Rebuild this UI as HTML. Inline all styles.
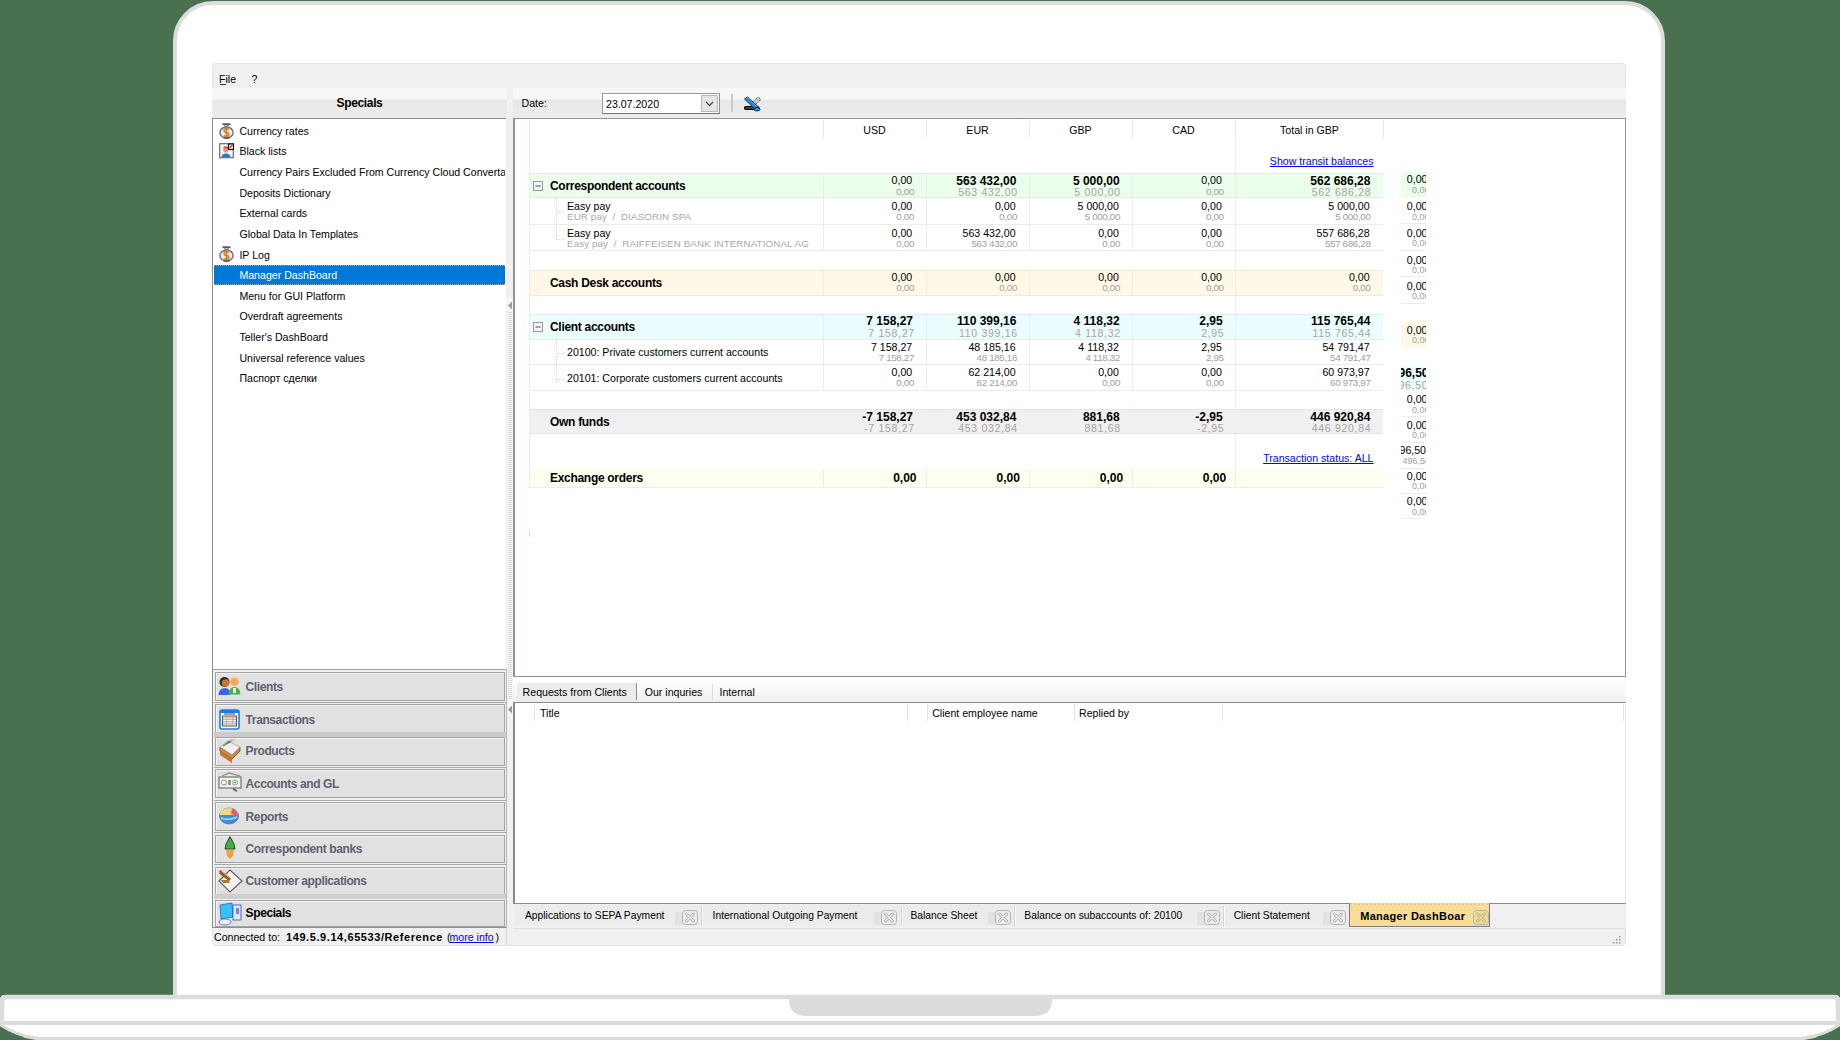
<!DOCTYPE html><html><head><meta charset="utf-8"><style>
html,body{margin:0;padding:0;}
body{width:1840px;height:1040px;position:relative;overflow:hidden;background:#49714f;font-family:"Liberation Sans", sans-serif;}
.t{position:absolute;white-space:pre;line-height:1;font-family:"Liberation Sans", sans-serif;}
.r{position:absolute;box-sizing:border-box;}
</style></head><body>
<div class="r" style="left:173px;top:1px;width:1492px;height:1040px;background:#fff;border:4.5px solid #dcdcdc;border-radius:40px;"></div>
<svg class="r" style="left:0px;top:990px" width="1840" height="50" viewBox="0 0 1840 50">
<path d="M5 5 H1835 Q1840 5 1840 10 V35 Q1820 50 1790 50 H50 Q20 50 0 35 V10 Q0 5 5 5 Z" fill="#fff"/>
<path d="M6 7 H1834 Q1838 7 1838 11 V33" fill="none" stroke="#dcdcdc" stroke-width="4.5"/>
<path d="M6 7 Q2 7 2 11 V33" fill="none" stroke="#dcdcdc" stroke-width="4.5"/>
<rect x="0" y="31" width="1840" height="4" fill="#dcdcdc"/>
<rect x="0" y="47" width="1840" height="3" fill="#dcdcdc"/>
<path d="M0 35 Q14 47 36 50 L0 50 Z" fill="#49714f"/>
<path d="M1840 35 Q1826 47 1804 50 L1840 50 Z" fill="#49714f"/>
<path d="M0 34.5 Q16 46 40 48.5" fill="none" stroke="#dcdcdc" stroke-width="3"/>
<path d="M1840 34.5 Q1824 46 1800 48.5" fill="none" stroke="#dcdcdc" stroke-width="3"/>
<path d="M789 6 H1052 V10 Q1052 26 1034 26 H807 Q789 26 789 10 Z" fill="#dcdcdc"/>
</svg>
<div class="r" style="left:212px;top:63px;width:1414px;height:883px;background:#f0f0f0;border:1px solid #e2e2e2;border-radius:4px;"></div>
<div class="t" style="left:219.00px;top:73.83px;font-size:10.6px;font-weight:400;color:#000;">File</div>
<div class="r" style="left:220px;top:84px;width:6px;height:1px;background:#333;"></div>
<div class="t" style="left:251.50px;top:73.83px;font-size:10.6px;font-weight:400;color:#000;">?</div>
<div class="r" style="left:212px;top:88px;width:295px;height:30px;background:linear-gradient(#f7f7f7 0px,#f7f7f7 11px,#e8e8e8 12px,#ececec 30px);"></div>
<div class="t" style="left:59.50px;width:600px;text-align:center;top:96.84px;font-size:12px;font-weight:700;color:#000;letter-spacing:-0.35px;">Specials</div>
<div class="r" style="left:212px;top:118px;width:294px;height:551px;background:#fff;border-left:1px solid #8c8c8c;border-top:1px solid #8c8c8c;"></div>
<div class="r" style="left:214px;top:264.5px;width:291px;height:20.5px;background:#0078d7;border-top:1px dotted #e8a040;border-bottom:1px dotted #e8a040;"></div>
<div class="r" style="left:213px;top:119px;width:292px;height:300px;overflow:hidden">
<div class="t" style="left:26.40px;top:7.03px;font-size:10.6px;font-weight:400;color:#000;">Currency rates</div>
<div class="t" style="left:26.40px;top:27.03px;font-size:10.6px;font-weight:400;color:#000;">Black lists</div>
<div class="t" style="left:26.40px;top:48.03px;font-size:10.6px;font-weight:400;color:#000;">Currency Pairs Excluded From Currency Cloud Convertation</div>
<div class="t" style="left:26.40px;top:69.03px;font-size:10.6px;font-weight:400;color:#000;">Deposits Dictionary</div>
<div class="t" style="left:26.40px;top:89.03px;font-size:10.6px;font-weight:400;color:#000;">External cards</div>
<div class="t" style="left:26.40px;top:110.03px;font-size:10.6px;font-weight:400;color:#000;">Global Data In Templates</div>
<div class="t" style="left:26.40px;top:131.03px;font-size:10.6px;font-weight:400;color:#000;">IP Log</div>
<div class="t" style="left:26.40px;top:151.03px;font-size:10.6px;font-weight:400;color:#fff;">Manager DashBoard</div>
<div class="t" style="left:26.40px;top:172.03px;font-size:10.6px;font-weight:400;color:#000;">Menu for GUI Platform</div>
<div class="t" style="left:26.40px;top:192.03px;font-size:10.6px;font-weight:400;color:#000;">Overdraft agreements</div>
<div class="t" style="left:26.40px;top:213.03px;font-size:10.6px;font-weight:400;color:#000;">Teller&#x27;s DashBoard</div>
<div class="t" style="left:26.40px;top:234.03px;font-size:10.6px;font-weight:400;color:#000;">Universal reference values</div>
<div class="t" style="left:26.40px;top:254.03px;font-size:10.6px;font-weight:400;color:#000;">Паспорт сделки</div>
</div>
<div class="r" style="left:506px;top:118px;width:7px;height:810px;background:#f0f0f0;"></div>
<div class="r" style="left:507px;top:298px;width:6px;height:418px;background:#f6f6f6;"></div>
<div class="r" style="left:508px;top:312px;width:4px;height:388px;background:repeating-linear-gradient(#d8d8d8 0 1px,#f6f6f6 1px 2px);"></div>
<svg class="r" style="left:507px;top:300px" width="6" height="11" viewBox="0 0 6 11"><path d="M5 1.5 L1 5.5 L5 9.5 Z" fill="#9a9a9a"/></svg>
<svg class="r" style="left:507px;top:704px" width="6" height="11" viewBox="0 0 6 11"><path d="M5 1.5 L1 5.5 L5 9.5 Z" fill="#9a9a9a"/></svg>
<div class="r" style="left:513px;top:88px;width:1113px;height:30px;background:linear-gradient(#f7f7f7 0px,#f7f7f7 11px,#e8e8e8 12px,#ececec 30px);"></div>
<div class="t" style="left:521.50px;top:98.03px;font-size:10.6px;font-weight:400;color:#000;">Date:</div>
<div class="r" style="left:602px;top:93px;width:118px;height:21px;background:#fff;border:1px solid #9c9c9c;border-bottom-color:#767676;border-right-color:#8890a0;"></div>
<div class="r" style="left:701px;top:95px;width:17px;height:17px;background:#e6e6e6;border:1px solid #b9b9b9;"></div>
<svg class="r" style="left:704px;top:99px" width="11" height="9" viewBox="0 0 11 9"><path d="M2 3 L5.5 6.5 L9 3" fill="none" stroke="#444" stroke-width="1.2"/></svg>
<div class="t" style="left:606.00px;top:99.03px;font-size:10.6px;font-weight:400;color:#000;">23.07.2020</div>
<div class="r" style="left:731px;top:94px;width:2px;height:18px;background:#cacaca;"></div>
<div class="r" style="left:513px;top:118px;width:1113px;height:559px;background:#fff;border:1px solid #8f939a;border-width:1px 1px 1px 2px;"></div>
<div class="r" style="left:513px;top:677px;width:1113px;height:26px;background:linear-gradient(#ffffff,#f0f0f0);"></div>
<div class="r" style="left:517px;top:683px;width:119px;height:19px;background:#ececec;"></div>
<div class="r" style="left:636px;top:683px;width:1px;height:17px;background:#8c8c8c;"></div>
<div class="r" style="left:712px;top:684px;width:1px;height:16px;background:#dedede;"></div>
<div class="t" style="left:522.60px;top:687.23px;font-size:10.6px;font-weight:400;color:#000;">Requests from Clients</div>
<div class="t" style="left:644.70px;top:687.23px;font-size:10.6px;font-weight:400;color:#000;">Our inquries</div>
<div class="t" style="left:719.50px;top:687.23px;font-size:10.6px;font-weight:400;color:#000;">Internal</div>
<div class="r" style="left:513px;top:702px;width:1113px;height:202px;background:#fff;border-top:1px solid #8a8a8a;border-left:2px solid #8a8a8a;border-right:1px solid #e6e6e6;border-bottom:1px solid #8a8a8a;"></div>
<div class="r" style="left:1623px;top:704px;width:1px;height:17px;background:#e2e2e2;"></div>
<div class="r" style="left:534px;top:704px;width:1px;height:17px;background:#e2e2e2;"></div>
<div class="r" style="left:907px;top:704px;width:1px;height:17px;background:#e2e2e2;"></div>
<div class="r" style="left:927px;top:704px;width:1px;height:17px;background:#e2e2e2;"></div>
<div class="r" style="left:1074px;top:704px;width:1px;height:17px;background:#e2e2e2;"></div>
<div class="r" style="left:1222px;top:704px;width:1px;height:17px;background:#e2e2e2;"></div>
<div class="t" style="left:540.00px;top:707.53px;font-size:10.6px;font-weight:400;color:#000;">Title</div>
<div class="t" style="left:932.20px;top:707.53px;font-size:10.6px;font-weight:400;color:#000;">Client employee name</div>
<div class="t" style="left:1079.00px;top:707.53px;font-size:10.6px;font-weight:400;color:#000;">Replied by</div>
<div class="r" style="left:513px;top:904px;width:1113px;height:25px;background:#f0f0f0;border-bottom:1px solid #dedede;"></div>
<div class="r" style="left:515px;top:905px;width:186px;height:21px;background:#ececec;"></div>
<div class="r" style="left:675px;top:912px;width:22px;height:13px;background:#e2e2e2;"></div>
<div class="t" style="left:525.00px;top:911.48px;font-size:10.3px;font-weight:400;color:#000;">Applications to SEPA Payment</div>
<svg class="r" style="left:682px;top:910px" width="16" height="15" viewBox="0 0 16 15"><rect x="0.5" y="0.5" width="15" height="14" rx="3" fill="#ececec" stroke="#b4b4b4"/><path d="M4.5 4 L11.5 11 M11.5 4 L4.5 11" stroke="#b0b0b0" stroke-width="3" stroke-linecap="round"/><path d="M4.5 4 L11.5 11 M11.5 4 L4.5 11" stroke="#ececec" stroke-width="1.2" stroke-linecap="round"/></svg>
<div class="r" style="left:702px;top:905px;width:199px;height:21px;background:#ececec;"></div>
<div class="r" style="left:874px;top:912px;width:22px;height:13px;background:#e2e2e2;"></div>
<div class="t" style="left:712.60px;top:911.48px;font-size:10.3px;font-weight:400;color:#000;">International Outgoing Payment</div>
<svg class="r" style="left:881px;top:910px" width="16" height="15" viewBox="0 0 16 15"><rect x="0.5" y="0.5" width="15" height="14" rx="3" fill="#ececec" stroke="#b4b4b4"/><path d="M4.5 4 L11.5 11 M11.5 4 L4.5 11" stroke="#b0b0b0" stroke-width="3" stroke-linecap="round"/><path d="M4.5 4 L11.5 11 M11.5 4 L4.5 11" stroke="#ececec" stroke-width="1.2" stroke-linecap="round"/></svg>
<div class="r" style="left:901px;top:905px;width:113px;height:21px;background:#ececec;"></div>
<div class="r" style="left:987.6px;top:912px;width:22px;height:13px;background:#e2e2e2;"></div>
<div class="t" style="left:910.40px;top:911.48px;font-size:10.3px;font-weight:400;color:#000;">Balance Sheet</div>
<svg class="r" style="left:994.6px;top:910px" width="16" height="15" viewBox="0 0 16 15"><rect x="0.5" y="0.5" width="15" height="14" rx="3" fill="#ececec" stroke="#b4b4b4"/><path d="M4.5 4 L11.5 11 M11.5 4 L4.5 11" stroke="#b0b0b0" stroke-width="3" stroke-linecap="round"/><path d="M4.5 4 L11.5 11 M11.5 4 L4.5 11" stroke="#ececec" stroke-width="1.2" stroke-linecap="round"/></svg>
<div class="r" style="left:1014px;top:905px;width:209px;height:21px;background:#ececec;"></div>
<div class="r" style="left:1197px;top:912px;width:22px;height:13px;background:#e2e2e2;"></div>
<div class="t" style="left:1024.30px;top:911.48px;font-size:10.3px;font-weight:400;color:#000;">Balance on subaccounts of: 20100</div>
<svg class="r" style="left:1204px;top:910px" width="16" height="15" viewBox="0 0 16 15"><rect x="0.5" y="0.5" width="15" height="14" rx="3" fill="#ececec" stroke="#b4b4b4"/><path d="M4.5 4 L11.5 11 M11.5 4 L4.5 11" stroke="#b0b0b0" stroke-width="3" stroke-linecap="round"/><path d="M4.5 4 L11.5 11 M11.5 4 L4.5 11" stroke="#ececec" stroke-width="1.2" stroke-linecap="round"/></svg>
<div class="r" style="left:1223px;top:905px;width:126px;height:21px;background:#ececec;"></div>
<div class="r" style="left:1323px;top:912px;width:22px;height:13px;background:#e2e2e2;"></div>
<div class="t" style="left:1233.70px;top:911.48px;font-size:10.3px;font-weight:400;color:#000;">Client Statement</div>
<svg class="r" style="left:1330px;top:910px" width="16" height="15" viewBox="0 0 16 15"><rect x="0.5" y="0.5" width="15" height="14" rx="3" fill="#ececec" stroke="#b4b4b4"/><path d="M4.5 4 L11.5 11 M11.5 4 L4.5 11" stroke="#b0b0b0" stroke-width="3" stroke-linecap="round"/><path d="M4.5 4 L11.5 11 M11.5 4 L4.5 11" stroke="#ececec" stroke-width="1.2" stroke-linecap="round"/></svg>
<div class="r" style="left:701px;top:906px;width:1px;height:20px;background:#d6d6d6;"></div>
<div class="r" style="left:702px;top:906px;width:1px;height:20px;background:#fafafa;"></div>
<div class="r" style="left:901px;top:906px;width:1px;height:20px;background:#d6d6d6;"></div>
<div class="r" style="left:902px;top:906px;width:1px;height:20px;background:#fafafa;"></div>
<div class="r" style="left:1014px;top:906px;width:1px;height:20px;background:#d6d6d6;"></div>
<div class="r" style="left:1015px;top:906px;width:1px;height:20px;background:#fafafa;"></div>
<div class="r" style="left:1223px;top:906px;width:1px;height:20px;background:#d6d6d6;"></div>
<div class="r" style="left:1224px;top:906px;width:1px;height:20px;background:#fafafa;"></div>
<div class="r" style="left:1349px;top:903px;width:141px;height:24px;background:#f8dc9a;border:1px solid #7c7c7c;border-top:none;"></div>
<div class="r" style="left:1350px;top:903px;width:139px;height:2px;background:repeating-linear-gradient(90deg,#f0c870 0 2px,#f8dc9a 2px 4px);"></div>
<div class="t" style="left:1360.20px;top:910.79px;font-size:11px;font-weight:700;color:#000;letter-spacing:0.3px;">Manager DashBoar</div>
<svg class="r" style="left:1472.5px;top:910px" width="16" height="15" viewBox="0 0 16 15"><rect x="0.5" y="0.5" width="15" height="14" rx="3" fill="#f6d88a" stroke="#b4b4b4"/><path d="M4.5 4 L11.5 11 M11.5 4 L4.5 11" stroke="#b0b0b0" stroke-width="3" stroke-linecap="round"/><path d="M4.5 4 L11.5 11 M11.5 4 L4.5 11" stroke="#f6d88a" stroke-width="1.2" stroke-linecap="round"/></svg>
<div class="t" style="left:214.00px;top:932.03px;font-size:10.6px;font-weight:400;color:#000;">Connected to:</div>
<div class="t" style="left:286.00px;top:931.69px;font-size:11px;font-weight:700;color:#000;letter-spacing:0.58px;">149.5.9.14,65533/Reference</div>
<div class="t" style="left:447.00px;top:932.03px;font-size:10.6px;font-weight:400;color:#000;">(</div>
<div class="t" style="left:449.50px;top:932.03px;font-size:10.6px;font-weight:400;color:#0000ee;text-decoration:underline;">more info</div>
<div class="t" style="left:495.50px;top:932.03px;font-size:10.6px;font-weight:400;color:#000;">)</div>
<div class="r" style="left:506px;top:928px;width:1px;height:17px;background:#d6d6d6;"></div>
<svg class="r" style="left:1612px;top:935px" width="10" height="10" viewBox="0 0 10 10"><rect x="7" y="1" width="1.5" height="1.5" fill="#9a9a9a"/><rect x="7" y="4" width="1.5" height="1.5" fill="#9a9a9a"/><rect x="4" y="4" width="1.5" height="1.5" fill="#9a9a9a"/><rect x="7" y="7" width="1.5" height="1.5" fill="#9a9a9a"/><rect x="4" y="7" width="1.5" height="1.5" fill="#9a9a9a"/><rect x="1" y="7" width="1.5" height="1.5" fill="#9a9a9a"/></svg>
<div class="r" style="left:212px;top:669px;width:295px;height:259px;background:#f0f0f0;border-top:1px solid #a0a0a0;border-left:1px solid #8c8c8c;border-right:1px solid #b4b4b4;border-bottom:1px solid #909090;"></div>
<div class="r" style="left:215px;top:672px;width:289.5px;height:29px;background:#e1e1e1;border:1px solid #a4a4a4;box-shadow:inset 1px 1px 0 #f2f2f2;"></div>
<div class="t" style="left:245.60px;top:680.84px;font-size:12px;font-weight:700;color:#5d6271;letter-spacing:-0.4px;">Clients</div>
<div class="r" style="left:215px;top:704px;width:289.5px;height:29px;background:#e1e1e1;border:1px solid #a4a4a4;box-shadow:inset 1px 1px 0 #f2f2f2;"></div>
<div class="t" style="left:245.60px;top:713.54px;font-size:12px;font-weight:700;color:#5d6271;letter-spacing:-0.4px;">Transactions</div>
<div class="r" style="left:215px;top:737px;width:289.5px;height:29px;background:#e1e1e1;border:1px solid #a4a4a4;box-shadow:inset 1px 1px 0 #f2f2f2;"></div>
<div class="t" style="left:245.60px;top:745.44px;font-size:12px;font-weight:700;color:#5d6271;letter-spacing:-0.4px;">Products</div>
<div class="r" style="left:215px;top:769px;width:289.5px;height:29px;background:#e1e1e1;border:1px solid #a4a4a4;box-shadow:inset 1px 1px 0 #f2f2f2;"></div>
<div class="t" style="left:245.60px;top:777.94px;font-size:12px;font-weight:700;color:#5d6271;letter-spacing:-0.4px;">Accounts and GL</div>
<div class="r" style="left:215px;top:802px;width:289.5px;height:29px;background:#e1e1e1;border:1px solid #a4a4a4;box-shadow:inset 1px 1px 0 #f2f2f2;"></div>
<div class="t" style="left:245.60px;top:810.84px;font-size:12px;font-weight:700;color:#5d6271;letter-spacing:-0.4px;">Reports</div>
<div class="r" style="left:215px;top:834.5px;width:289.5px;height:28.5px;background:#e1e1e1;border:1px solid #a4a4a4;box-shadow:inset 1px 1px 0 #f2f2f2;"></div>
<div class="t" style="left:245.60px;top:842.74px;font-size:12px;font-weight:700;color:#5d6271;letter-spacing:-0.4px;">Correspondent banks</div>
<div class="r" style="left:215px;top:867px;width:289.5px;height:28px;background:#e1e1e1;border:1px solid #a4a4a4;box-shadow:inset 1px 1px 0 #f2f2f2;"></div>
<div class="t" style="left:245.60px;top:875.24px;font-size:12px;font-weight:700;color:#5d6271;letter-spacing:-0.4px;">Customer applications</div>
<div class="r" style="left:215px;top:899.5px;width:289.5px;height:27.5px;background:#e1e1e1;border:1px solid #a4a4a4;box-shadow:inset 1px 1px 0 #f2f2f2;"></div>
<div class="t" style="left:245.60px;top:907.44px;font-size:12px;font-weight:700;color:#000;letter-spacing:-0.4px;">Specials</div>
<div class="r" style="left:214px;top:702px;width:292px;height:1px;background:#a8a8a8;"></div>
<div class="r" style="left:214px;top:767px;width:292px;height:1px;background:#a8a8a8;"></div>
<div class="r" style="left:214px;top:799.5px;width:292px;height:1px;background:#a8a8a8;"></div>
<div class="r" style="left:214px;top:832px;width:292px;height:1px;background:#a8a8a8;"></div>
<div class="r" style="left:214px;top:864px;width:292px;height:1px;background:#a8a8a8;"></div>
<div class="r" style="left:214px;top:732px;width:292px;height:5px;background:#cbcbcb;"></div>
<div class="r" style="left:214px;top:894px;width:292px;height:4.5px;background:#cfcfcf;"></div>
<div class="r" style="left:823px;top:121px;width:1px;height:17px;background:#e6e6e6;"></div>
<div class="r" style="left:926px;top:121px;width:1px;height:17px;background:#e6e6e6;"></div>
<div class="r" style="left:1029px;top:121px;width:1px;height:17px;background:#e6e6e6;"></div>
<div class="r" style="left:1132px;top:121px;width:1px;height:17px;background:#e6e6e6;"></div>
<div class="r" style="left:1235px;top:121px;width:1px;height:17px;background:#e6e6e6;"></div>
<div class="r" style="left:1383px;top:121px;width:1px;height:17px;background:#e6e6e6;"></div>
<div class="r" style="left:529px;top:120px;width:1px;height:368px;background:#ececec;"></div>
<div class="r" style="left:1235px;top:138px;width:1px;height:350px;background:#ededed;"></div>
<div class="t" style="left:574.50px;width:600px;text-align:center;top:124.83px;font-size:10.6px;font-weight:400;color:#000;">USD</div>
<div class="t" style="left:677.50px;width:600px;text-align:center;top:124.83px;font-size:10.6px;font-weight:400;color:#000;">EUR</div>
<div class="t" style="left:780.50px;width:600px;text-align:center;top:124.83px;font-size:10.6px;font-weight:400;color:#000;">GBP</div>
<div class="t" style="left:883.50px;width:600px;text-align:center;top:124.83px;font-size:10.6px;font-weight:400;color:#000;">CAD</div>
<div class="t" style="left:1009.50px;width:600px;text-align:center;top:124.83px;font-size:10.6px;font-weight:400;color:#000;">Total in GBP</div>
<div class="t" style="left:773.50px;width:600px;text-align:right;top:156.33px;font-size:10.6px;font-weight:400;color:#0000ff;text-decoration:underline;">Show transit balances</div>
<div class="t" style="left:773.50px;width:600px;text-align:right;top:453.33px;font-size:10.6px;font-weight:400;color:#0000ff;text-decoration:underline;">Transaction status: ALL</div>
<div class="r" style="left:530px;top:172.5px;width:853px;height:25.0px;background:#ebfdeb;border-top:1px solid rgba(0,0,0,0.05);border-bottom:1px solid rgba(0,0,0,0.05);"></div>
<div class="r" style="left:823px;top:172.5px;width:1px;height:25.0px;background:rgba(0,0,0,0.045);"></div>
<div class="r" style="left:926px;top:172.5px;width:1px;height:25.0px;background:rgba(0,0,0,0.045);"></div>
<div class="r" style="left:1029px;top:172.5px;width:1px;height:25.0px;background:rgba(0,0,0,0.045);"></div>
<div class="r" style="left:1132px;top:172.5px;width:1px;height:25.0px;background:rgba(0,0,0,0.045);"></div>
<div class="r" style="left:1235px;top:172.5px;width:1px;height:25.0px;background:rgba(0,0,0,0.045);"></div>
<svg class="r" style="left:533px;top:180.7px" width="10" height="10" viewBox="0 0 10 10"><rect x="0.5" y="0.5" width="9" height="9" fill="#f4f4f4" stroke="#9a9a9a"/><path d="M2.5 5 H7.5" stroke="#4a6aa8" stroke-width="1.2"/></svg>
<div class="t" style="left:550.00px;top:179.54px;font-size:12px;font-weight:700;color:#000;letter-spacing:-0.3px;">Correspondent accounts</div>
<div class="t" style="left:312.20px;width:600px;text-align:right;top:175.43px;font-size:10.6px;font-weight:400;color:#000;">0,00</div>
<div class="t" style="left:314.00px;width:600px;text-align:right;top:186.70px;font-size:9.8px;font-weight:400;color:#a0a0a0;letter-spacing:-0.35px;">0,00</div>
<div class="t" style="left:416.40px;width:600px;text-align:right;top:174.64px;font-size:12px;font-weight:700;color:#000;">563 432,00</div>
<div class="t" style="left:417.80px;width:600px;text-align:right;top:187.11px;font-size:10.5px;font-weight:400;color:#a4a4a4;letter-spacing:0.7px;">563 432,00</div>
<div class="t" style="left:519.60px;width:600px;text-align:right;top:174.64px;font-size:12px;font-weight:700;color:#000;">5 000,00</div>
<div class="t" style="left:520.80px;width:600px;text-align:right;top:187.11px;font-size:10.5px;font-weight:400;color:#a4a4a4;letter-spacing:0.7px;">5 000,00</div>
<div class="t" style="left:621.80px;width:600px;text-align:right;top:175.43px;font-size:10.6px;font-weight:400;color:#000;">0,00</div>
<div class="t" style="left:623.60px;width:600px;text-align:right;top:186.70px;font-size:9.8px;font-weight:400;color:#a0a0a0;letter-spacing:-0.35px;">0,00</div>
<div class="t" style="left:770.40px;width:600px;text-align:right;top:174.64px;font-size:12px;font-weight:700;color:#000;">562 686,28</div>
<div class="t" style="left:771.30px;width:600px;text-align:right;top:187.11px;font-size:10.5px;font-weight:400;color:#a4a4a4;letter-spacing:0.7px;">562 686,28</div>
<div class="r" style="left:823px;top:198px;width:1px;height:27px;background:#ececec;"></div>
<div class="r" style="left:926px;top:198px;width:1px;height:27px;background:#ececec;"></div>
<div class="r" style="left:1029px;top:198px;width:1px;height:27px;background:#ececec;"></div>
<div class="r" style="left:1132px;top:198px;width:1px;height:27px;background:#ececec;"></div>
<div class="r" style="left:1235px;top:198px;width:1px;height:27px;background:#ececec;"></div>
<div class="r" style="left:530px;top:224px;width:853px;height:1px;background:#ececec;"></div>
<div class="t" style="left:567.00px;top:201.03px;font-size:10.6px;font-weight:400;color:#000;">Easy pay</div>
<div class="t" style="left:567.00px;top:212.30px;font-size:9.8px;font-weight:400;color:#a8a8a8;letter-spacing:0.1px;">EUR pay  /  DIASORIN SPA</div>
<div class="t" style="left:312.20px;width:600px;text-align:right;top:201.03px;font-size:10.6px;font-weight:400;color:#000;">0,00</div>
<div class="t" style="left:314.00px;width:600px;text-align:right;top:212.30px;font-size:9.8px;font-weight:400;color:#a0a0a0;letter-spacing:-0.35px;">0,00</div>
<div class="t" style="left:415.60px;width:600px;text-align:right;top:201.03px;font-size:10.6px;font-weight:400;color:#000;">0,00</div>
<div class="t" style="left:417.00px;width:600px;text-align:right;top:212.30px;font-size:9.8px;font-weight:400;color:#a0a0a0;letter-spacing:-0.35px;">0,00</div>
<div class="t" style="left:518.80px;width:600px;text-align:right;top:201.03px;font-size:10.6px;font-weight:400;color:#000;">5 000,00</div>
<div class="t" style="left:520.00px;width:600px;text-align:right;top:212.30px;font-size:9.8px;font-weight:400;color:#a0a0a0;letter-spacing:-0.35px;">5 000,00</div>
<div class="t" style="left:621.80px;width:600px;text-align:right;top:201.03px;font-size:10.6px;font-weight:400;color:#000;">0,00</div>
<div class="t" style="left:623.60px;width:600px;text-align:right;top:212.30px;font-size:9.8px;font-weight:400;color:#a0a0a0;letter-spacing:-0.35px;">0,00</div>
<div class="t" style="left:769.60px;width:600px;text-align:right;top:201.03px;font-size:10.6px;font-weight:400;color:#000;">5 000,00</div>
<div class="t" style="left:770.50px;width:600px;text-align:right;top:212.30px;font-size:9.8px;font-weight:400;color:#a0a0a0;letter-spacing:-0.35px;">5 000,00</div>
<div class="r" style="left:823px;top:225px;width:1px;height:26px;background:#ececec;"></div>
<div class="r" style="left:926px;top:225px;width:1px;height:26px;background:#ececec;"></div>
<div class="r" style="left:1029px;top:225px;width:1px;height:26px;background:#ececec;"></div>
<div class="r" style="left:1132px;top:225px;width:1px;height:26px;background:#ececec;"></div>
<div class="r" style="left:1235px;top:225px;width:1px;height:26px;background:#ececec;"></div>
<div class="r" style="left:530px;top:250px;width:853px;height:1px;background:#ececec;"></div>
<div class="t" style="left:567.00px;top:227.63px;font-size:10.6px;font-weight:400;color:#000;">Easy pay</div>
<div class="t" style="left:567.00px;top:238.90px;font-size:9.8px;font-weight:400;color:#a8a8a8;letter-spacing:0.1px;">Easy pay  /  RAIFFEISEN BANK INTERNATIONAL AG</div>
<div class="t" style="left:312.20px;width:600px;text-align:right;top:227.63px;font-size:10.6px;font-weight:400;color:#000;">0,00</div>
<div class="t" style="left:314.00px;width:600px;text-align:right;top:239.10px;font-size:9.8px;font-weight:400;color:#a0a0a0;letter-spacing:-0.35px;">0,00</div>
<div class="t" style="left:415.60px;width:600px;text-align:right;top:227.63px;font-size:10.6px;font-weight:400;color:#000;">563 432,00</div>
<div class="t" style="left:417.00px;width:600px;text-align:right;top:239.10px;font-size:9.8px;font-weight:400;color:#a0a0a0;letter-spacing:-0.35px;">563 432,00</div>
<div class="t" style="left:518.80px;width:600px;text-align:right;top:227.63px;font-size:10.6px;font-weight:400;color:#000;">0,00</div>
<div class="t" style="left:520.00px;width:600px;text-align:right;top:239.10px;font-size:9.8px;font-weight:400;color:#a0a0a0;letter-spacing:-0.35px;">0,00</div>
<div class="t" style="left:621.80px;width:600px;text-align:right;top:227.63px;font-size:10.6px;font-weight:400;color:#000;">0,00</div>
<div class="t" style="left:623.60px;width:600px;text-align:right;top:239.10px;font-size:9.8px;font-weight:400;color:#a0a0a0;letter-spacing:-0.35px;">0,00</div>
<div class="t" style="left:769.60px;width:600px;text-align:right;top:227.63px;font-size:10.6px;font-weight:400;color:#000;">557 686,28</div>
<div class="t" style="left:770.50px;width:600px;text-align:right;top:239.10px;font-size:9.8px;font-weight:400;color:#a0a0a0;letter-spacing:-0.35px;">557 686,28</div>
<div class="r" style="left:530px;top:269.5px;width:853px;height:26.0px;background:#fff8e6;border-top:1px solid rgba(0,0,0,0.05);border-bottom:1px solid rgba(0,0,0,0.05);"></div>
<div class="r" style="left:823px;top:269.5px;width:1px;height:26.0px;background:rgba(0,0,0,0.045);"></div>
<div class="r" style="left:926px;top:269.5px;width:1px;height:26.0px;background:rgba(0,0,0,0.045);"></div>
<div class="r" style="left:1029px;top:269.5px;width:1px;height:26.0px;background:rgba(0,0,0,0.045);"></div>
<div class="r" style="left:1132px;top:269.5px;width:1px;height:26.0px;background:rgba(0,0,0,0.045);"></div>
<div class="r" style="left:1235px;top:269.5px;width:1px;height:26.0px;background:rgba(0,0,0,0.045);"></div>
<div class="t" style="left:550.00px;top:276.74px;font-size:12px;font-weight:700;color:#000;letter-spacing:-0.3px;">Cash Desk accounts</div>
<div class="t" style="left:312.20px;width:600px;text-align:right;top:271.73px;font-size:10.6px;font-weight:400;color:#000;">0,00</div>
<div class="t" style="left:314.00px;width:600px;text-align:right;top:283.40px;font-size:9.8px;font-weight:400;color:#a0a0a0;letter-spacing:-0.35px;">0,00</div>
<div class="t" style="left:415.60px;width:600px;text-align:right;top:271.73px;font-size:10.6px;font-weight:400;color:#000;">0,00</div>
<div class="t" style="left:417.00px;width:600px;text-align:right;top:283.40px;font-size:9.8px;font-weight:400;color:#a0a0a0;letter-spacing:-0.35px;">0,00</div>
<div class="t" style="left:518.80px;width:600px;text-align:right;top:271.73px;font-size:10.6px;font-weight:400;color:#000;">0,00</div>
<div class="t" style="left:520.00px;width:600px;text-align:right;top:283.40px;font-size:9.8px;font-weight:400;color:#a0a0a0;letter-spacing:-0.35px;">0,00</div>
<div class="t" style="left:621.80px;width:600px;text-align:right;top:271.73px;font-size:10.6px;font-weight:400;color:#000;">0,00</div>
<div class="t" style="left:623.60px;width:600px;text-align:right;top:283.40px;font-size:9.8px;font-weight:400;color:#a0a0a0;letter-spacing:-0.35px;">0,00</div>
<div class="t" style="left:769.60px;width:600px;text-align:right;top:271.73px;font-size:10.6px;font-weight:400;color:#000;">0,00</div>
<div class="t" style="left:770.50px;width:600px;text-align:right;top:283.40px;font-size:9.8px;font-weight:400;color:#a0a0a0;letter-spacing:-0.35px;">0,00</div>
<div class="r" style="left:530px;top:314px;width:853px;height:25.5px;background:#ebfdff;border-top:1px solid rgba(0,0,0,0.05);border-bottom:1px solid rgba(0,0,0,0.05);"></div>
<div class="r" style="left:823px;top:314px;width:1px;height:25.5px;background:rgba(0,0,0,0.045);"></div>
<div class="r" style="left:926px;top:314px;width:1px;height:25.5px;background:rgba(0,0,0,0.045);"></div>
<div class="r" style="left:1029px;top:314px;width:1px;height:25.5px;background:rgba(0,0,0,0.045);"></div>
<div class="r" style="left:1132px;top:314px;width:1px;height:25.5px;background:rgba(0,0,0,0.045);"></div>
<div class="r" style="left:1235px;top:314px;width:1px;height:25.5px;background:rgba(0,0,0,0.045);"></div>
<svg class="r" style="left:533px;top:321.9px" width="10" height="10" viewBox="0 0 10 10"><rect x="0.5" y="0.5" width="9" height="9" fill="#f4f4f4" stroke="#9a9a9a"/><path d="M2.5 5 H7.5" stroke="#4a6aa8" stroke-width="1.2"/></svg>
<div class="t" style="left:550.00px;top:320.74px;font-size:12px;font-weight:700;color:#000;letter-spacing:-0.3px;">Client accounts</div>
<div class="t" style="left:313.00px;width:600px;text-align:right;top:315.44px;font-size:12px;font-weight:700;color:#000;">7 158,27</div>
<div class="t" style="left:314.80px;width:600px;text-align:right;top:327.71px;font-size:10.5px;font-weight:400;color:#a4a4a4;letter-spacing:0.7px;">7 158,27</div>
<div class="t" style="left:416.40px;width:600px;text-align:right;top:315.44px;font-size:12px;font-weight:700;color:#000;">110 399,16</div>
<div class="t" style="left:417.80px;width:600px;text-align:right;top:327.71px;font-size:10.5px;font-weight:400;color:#a4a4a4;letter-spacing:0.7px;">110 399,16</div>
<div class="t" style="left:519.60px;width:600px;text-align:right;top:315.44px;font-size:12px;font-weight:700;color:#000;">4 118,32</div>
<div class="t" style="left:520.80px;width:600px;text-align:right;top:327.71px;font-size:10.5px;font-weight:400;color:#a4a4a4;letter-spacing:0.7px;">4 118,32</div>
<div class="t" style="left:622.60px;width:600px;text-align:right;top:315.44px;font-size:12px;font-weight:700;color:#000;">2,95</div>
<div class="t" style="left:624.40px;width:600px;text-align:right;top:327.71px;font-size:10.5px;font-weight:400;color:#a4a4a4;letter-spacing:0.7px;">2,95</div>
<div class="t" style="left:770.40px;width:600px;text-align:right;top:315.44px;font-size:12px;font-weight:700;color:#000;">115 765,44</div>
<div class="t" style="left:771.30px;width:600px;text-align:right;top:327.71px;font-size:10.5px;font-weight:400;color:#a4a4a4;letter-spacing:0.7px;">115 765,44</div>
<div class="r" style="left:823px;top:340px;width:1px;height:25px;background:#ececec;"></div>
<div class="r" style="left:926px;top:340px;width:1px;height:25px;background:#ececec;"></div>
<div class="r" style="left:1029px;top:340px;width:1px;height:25px;background:#ececec;"></div>
<div class="r" style="left:1132px;top:340px;width:1px;height:25px;background:#ececec;"></div>
<div class="r" style="left:1235px;top:340px;width:1px;height:25px;background:#ececec;"></div>
<div class="r" style="left:530px;top:364px;width:853px;height:1px;background:#ececec;"></div>
<div class="t" style="left:567.00px;top:347.13px;font-size:10.6px;font-weight:400;color:#000;">20100: Private customers current accounts</div>
<div class="t" style="left:312.20px;width:600px;text-align:right;top:341.93px;font-size:10.6px;font-weight:400;color:#000;">7 158,27</div>
<div class="t" style="left:314.00px;width:600px;text-align:right;top:352.70px;font-size:9.8px;font-weight:400;color:#a0a0a0;letter-spacing:-0.35px;">7 158,27</div>
<div class="t" style="left:415.60px;width:600px;text-align:right;top:341.93px;font-size:10.6px;font-weight:400;color:#000;">48 185,16</div>
<div class="t" style="left:417.00px;width:600px;text-align:right;top:352.70px;font-size:9.8px;font-weight:400;color:#a0a0a0;letter-spacing:-0.35px;">48 185,16</div>
<div class="t" style="left:518.80px;width:600px;text-align:right;top:341.93px;font-size:10.6px;font-weight:400;color:#000;">4 118,32</div>
<div class="t" style="left:520.00px;width:600px;text-align:right;top:352.70px;font-size:9.8px;font-weight:400;color:#a0a0a0;letter-spacing:-0.35px;">4 118,32</div>
<div class="t" style="left:621.80px;width:600px;text-align:right;top:341.93px;font-size:10.6px;font-weight:400;color:#000;">2,95</div>
<div class="t" style="left:623.60px;width:600px;text-align:right;top:352.70px;font-size:9.8px;font-weight:400;color:#a0a0a0;letter-spacing:-0.35px;">2,95</div>
<div class="t" style="left:769.60px;width:600px;text-align:right;top:341.93px;font-size:10.6px;font-weight:400;color:#000;">54 791,47</div>
<div class="t" style="left:770.50px;width:600px;text-align:right;top:352.70px;font-size:9.8px;font-weight:400;color:#a0a0a0;letter-spacing:-0.35px;">54 791,47</div>
<div class="r" style="left:823px;top:365px;width:1px;height:26px;background:#ececec;"></div>
<div class="r" style="left:926px;top:365px;width:1px;height:26px;background:#ececec;"></div>
<div class="r" style="left:1029px;top:365px;width:1px;height:26px;background:#ececec;"></div>
<div class="r" style="left:1132px;top:365px;width:1px;height:26px;background:#ececec;"></div>
<div class="r" style="left:1235px;top:365px;width:1px;height:26px;background:#ececec;"></div>
<div class="r" style="left:530px;top:390px;width:853px;height:1px;background:#ececec;"></div>
<div class="t" style="left:567.00px;top:372.83px;font-size:10.6px;font-weight:400;color:#000;">20101: Corporate customers current accounts</div>
<div class="t" style="left:312.20px;width:600px;text-align:right;top:367.03px;font-size:10.6px;font-weight:400;color:#000;">0,00</div>
<div class="t" style="left:314.00px;width:600px;text-align:right;top:378.20px;font-size:9.8px;font-weight:400;color:#a0a0a0;letter-spacing:-0.35px;">0,00</div>
<div class="t" style="left:415.60px;width:600px;text-align:right;top:367.03px;font-size:10.6px;font-weight:400;color:#000;">62 214,00</div>
<div class="t" style="left:417.00px;width:600px;text-align:right;top:378.20px;font-size:9.8px;font-weight:400;color:#a0a0a0;letter-spacing:-0.35px;">62 214,00</div>
<div class="t" style="left:518.80px;width:600px;text-align:right;top:367.03px;font-size:10.6px;font-weight:400;color:#000;">0,00</div>
<div class="t" style="left:520.00px;width:600px;text-align:right;top:378.20px;font-size:9.8px;font-weight:400;color:#a0a0a0;letter-spacing:-0.35px;">0,00</div>
<div class="t" style="left:621.80px;width:600px;text-align:right;top:367.03px;font-size:10.6px;font-weight:400;color:#000;">0,00</div>
<div class="t" style="left:623.60px;width:600px;text-align:right;top:378.20px;font-size:9.8px;font-weight:400;color:#a0a0a0;letter-spacing:-0.35px;">0,00</div>
<div class="t" style="left:769.60px;width:600px;text-align:right;top:367.03px;font-size:10.6px;font-weight:400;color:#000;">60 973,97</div>
<div class="t" style="left:770.50px;width:600px;text-align:right;top:378.20px;font-size:9.8px;font-weight:400;color:#a0a0a0;letter-spacing:-0.35px;">60 973,97</div>
<div class="r" style="left:530px;top:408.7px;width:853px;height:25.80000000000001px;background:#f0f0f0;border-top:1px solid rgba(0,0,0,0.05);border-bottom:1px solid rgba(0,0,0,0.05);"></div>
<div class="t" style="left:550.00px;top:415.84px;font-size:12px;font-weight:700;color:#000;letter-spacing:-0.3px;">Own funds</div>
<div class="t" style="left:313.00px;width:600px;text-align:right;top:411.14px;font-size:12px;font-weight:700;color:#000;">-7 158,27</div>
<div class="t" style="left:314.80px;width:600px;text-align:right;top:423.11px;font-size:10.5px;font-weight:400;color:#a4a4a4;letter-spacing:0.7px;">-7 158,27</div>
<div class="t" style="left:416.40px;width:600px;text-align:right;top:411.14px;font-size:12px;font-weight:700;color:#000;">453 032,84</div>
<div class="t" style="left:417.80px;width:600px;text-align:right;top:423.11px;font-size:10.5px;font-weight:400;color:#a4a4a4;letter-spacing:0.7px;">453 032,84</div>
<div class="t" style="left:519.60px;width:600px;text-align:right;top:411.14px;font-size:12px;font-weight:700;color:#000;">881,68</div>
<div class="t" style="left:520.80px;width:600px;text-align:right;top:423.11px;font-size:10.5px;font-weight:400;color:#a4a4a4;letter-spacing:0.7px;">881,68</div>
<div class="t" style="left:622.60px;width:600px;text-align:right;top:411.14px;font-size:12px;font-weight:700;color:#000;">-2,95</div>
<div class="t" style="left:624.40px;width:600px;text-align:right;top:423.11px;font-size:10.5px;font-weight:400;color:#a4a4a4;letter-spacing:0.7px;">-2,95</div>
<div class="t" style="left:770.40px;width:600px;text-align:right;top:411.14px;font-size:12px;font-weight:700;color:#000;">446 920,84</div>
<div class="t" style="left:771.30px;width:600px;text-align:right;top:423.11px;font-size:10.5px;font-weight:400;color:#a4a4a4;letter-spacing:0.7px;">446 920,84</div>
<div class="r" style="left:530px;top:469px;width:853px;height:18.5px;background:#fffff0;border-bottom:1px solid #ececec;"></div>
<div class="r" style="left:823px;top:469px;width:1px;height:18px;background:#ececec;"></div>
<div class="r" style="left:926px;top:469px;width:1px;height:18px;background:#ececec;"></div>
<div class="r" style="left:1029px;top:469px;width:1px;height:18px;background:#ececec;"></div>
<div class="r" style="left:1132px;top:469px;width:1px;height:18px;background:#ececec;"></div>
<div class="r" style="left:1235px;top:469px;width:1px;height:18px;background:#ececec;"></div>
<div class="t" style="left:550.00px;top:471.54px;font-size:12px;font-weight:700;color:#000;letter-spacing:-0.3px;">Exchange orders</div>
<div class="t" style="left:316.50px;width:600px;text-align:right;top:471.54px;font-size:12px;font-weight:700;color:#000;">0,00</div>
<div class="t" style="left:419.90px;width:600px;text-align:right;top:471.54px;font-size:12px;font-weight:700;color:#000;">0,00</div>
<div class="t" style="left:523.10px;width:600px;text-align:right;top:471.54px;font-size:12px;font-weight:700;color:#000;">0,00</div>
<div class="t" style="left:626.10px;width:600px;text-align:right;top:471.54px;font-size:12px;font-weight:700;color:#000;">0,00</div>
<div class="r" style="left:529px;top:530px;width:1px;height:7px;background:#dcdcdc;"></div>
<div class="r" style="left:556px;top:198px;width:1px;height:41.5px;border-left:1px dotted #d4d4d4;"></div>
<div class="r" style="left:557px;top:211.5px;width:7px;height:1px;border-top:1px dotted #d4d4d4;"></div>
<div class="r" style="left:557px;top:239px;width:7px;height:1px;border-top:1px dotted #d4d4d4;"></div>
<div class="r" style="left:556px;top:340px;width:1px;height:42px;border-left:1px dotted #d4d4d4;"></div>
<div class="r" style="left:557px;top:352.5px;width:7px;height:1px;border-top:1px dotted #d4d4d4;"></div>
<div class="r" style="left:557px;top:378.5px;width:7px;height:1px;border-top:1px dotted #d4d4d4;"></div>
<div class="r" style="left:1401px;top:120px;width:25px;height:420px;overflow:hidden">
<div class="r" style="left:0px;top:52px;width:25px;height:25.19999999999999px;background:#ebfdeb;"></div>
<div class="t" style="left:5.80px;top:54.43px;font-size:10.6px;font-weight:400;color:#000;">0,00</div>
<div class="t" style="left:11.00px;top:66.08px;font-size:9px;font-weight:400;color:#a0a0a0;">0,00</div>
<div class="r" style="left:0px;top:103px;width:25px;height:1px;background:#ececec;"></div>
<div class="t" style="left:5.80px;top:81.23px;font-size:10.6px;font-weight:400;color:#000;">0,00</div>
<div class="t" style="left:11.00px;top:92.88px;font-size:9px;font-weight:400;color:#a0a0a0;">0,00</div>
<div class="r" style="left:0px;top:129.8px;width:25px;height:1px;background:#ececec;"></div>
<div class="t" style="left:5.80px;top:108.03px;font-size:10.6px;font-weight:400;color:#000;">0,00</div>
<div class="t" style="left:11.00px;top:118.88px;font-size:9px;font-weight:400;color:#a0a0a0;">0,00</div>
<div class="r" style="left:0px;top:156.3px;width:25px;height:1px;background:#ececec;"></div>
<div class="t" style="left:5.80px;top:134.83px;font-size:10.6px;font-weight:400;color:#000;">0,00</div>
<div class="t" style="left:11.00px;top:145.68px;font-size:9px;font-weight:400;color:#a0a0a0;">0,00</div>
<div class="r" style="left:0px;top:182.60000000000002px;width:25px;height:1px;background:#ececec;"></div>
<div class="t" style="left:5.80px;top:160.83px;font-size:10.6px;font-weight:400;color:#000;">0,00</div>
<div class="t" style="left:11.00px;top:171.68px;font-size:9px;font-weight:400;color:#a0a0a0;">0,00</div>
<div class="r" style="left:0px;top:201.8px;width:25px;height:26.0px;background:#fff8e6;"></div>
<div class="t" style="left:5.80px;top:204.93px;font-size:10.6px;font-weight:400;color:#000;">0,00</div>
<div class="t" style="left:11.00px;top:216.38px;font-size:9px;font-weight:400;color:#a0a0a0;">0,00</div>
<div class="r" style="left:0px;top:246px;width:25px;height:24.19999999999999px;background:#ebfdff;"></div>
<div class="t" style="left:-2.50px;top:247.04px;font-size:12px;font-weight:700;color:#000;">96,50</div>
<div class="t" style="left:-2.50px;top:259.71px;font-size:10.5px;font-weight:400;color:#a4a4a4;letter-spacing:0.7px;">96,50</div>
<div class="r" style="left:0px;top:296px;width:25px;height:1px;background:#ececec;"></div>
<div class="t" style="left:5.80px;top:274.13px;font-size:10.6px;font-weight:400;color:#000;">0,00</div>
<div class="t" style="left:11.00px;top:285.88px;font-size:9px;font-weight:400;color:#a0a0a0;">0,00</div>
<div class="r" style="left:0px;top:322px;width:25px;height:1px;background:#ececec;"></div>
<div class="t" style="left:5.80px;top:300.13px;font-size:10.6px;font-weight:400;color:#000;">0,00</div>
<div class="t" style="left:11.00px;top:310.98px;font-size:9px;font-weight:400;color:#a0a0a0;">0,00</div>
<div class="r" style="left:0px;top:347.9px;width:25px;height:1px;background:#ececec;"></div>
<div class="t" style="left:-1.50px;top:325.23px;font-size:10.6px;font-weight:400;color:#000;">96,50</div>
<div class="t" style="left:1.50px;top:336.98px;font-size:9px;font-weight:400;color:#a0a0a0;">496,50</div>
<div class="r" style="left:0px;top:373px;width:25px;height:1px;background:#ececec;"></div>
<div class="t" style="left:5.80px;top:351.13px;font-size:10.6px;font-weight:400;color:#000;">0,00</div>
<div class="t" style="left:11.00px;top:362.08px;font-size:9px;font-weight:400;color:#a0a0a0;">0,00</div>
<div class="r" style="left:0px;top:398px;width:25px;height:1px;background:#ececec;"></div>
<div class="t" style="left:5.80px;top:376.23px;font-size:10.6px;font-weight:400;color:#000;">0,00</div>
<div class="t" style="left:11.00px;top:387.98px;font-size:9px;font-weight:400;color:#a0a0a0;">0,00</div>
</div>
<svg class="r" style="left:219px;top:123px" width="16" height="16" viewBox="0 0 16 16"><rect x="3.5" y="0.3" width="8" height="1.8" fill="#505868"/><path d="M5.5 2 L7.5 4.5 L9.5 2" stroke="#7a7e88" fill="none" stroke-width="1.3"/><ellipse cx="7.5" cy="9.6" rx="6.6" ry="5.6" fill="#eceef2" stroke="#6a6e78" stroke-width="1.4"/><path d="M9.8 6.8 Q9 5.6 7.4 5.6 Q5.2 5.6 5.2 7.6 Q5.2 9.2 7.5 9.6 Q9.8 10 9.8 11.8 Q9.8 13.6 7.5 13.6 Q5.8 13.6 5 12.4" fill="none" stroke="#e08a2a" stroke-width="2"/><path d="M7.5 4.5 V14.8" stroke="#d07a20" stroke-width="1.3"/><rect x="4.5" y="14.3" width="6" height="1.4" fill="#505868"/></svg>
<svg class="r" style="left:219px;top:246px" width="16" height="16" viewBox="0 0 16 16"><rect x="3.5" y="0.3" width="8" height="1.8" fill="#505868"/><path d="M5.5 2 L7.5 4.5 L9.5 2" stroke="#7a7e88" fill="none" stroke-width="1.3"/><ellipse cx="7.5" cy="9.6" rx="6.6" ry="5.6" fill="#eceef2" stroke="#6a6e78" stroke-width="1.4"/><path d="M9.8 6.8 Q9 5.6 7.4 5.6 Q5.2 5.6 5.2 7.6 Q5.2 9.2 7.5 9.6 Q9.8 10 9.8 11.8 Q9.8 13.6 7.5 13.6 Q5.8 13.6 5 12.4" fill="none" stroke="#e08a2a" stroke-width="2"/><path d="M7.5 4.5 V14.8" stroke="#d07a20" stroke-width="1.3"/><rect x="4.5" y="14.3" width="6" height="1.4" fill="#505868"/></svg>
<svg class="r" style="left:219px;top:143px" width="16" height="16" viewBox="0 0 16 16"><rect x="0.7" y="0.7" width="13.6" height="14" fill="#f6f8fb" stroke="#6c6c6c" stroke-width="1.2"/><path d="M2.5 14 Q3 10.5 7 10.5 Q11 10.5 11.5 14 Z" fill="#1e78d0"/><circle cx="6.8" cy="7" r="2.6" fill="#e8a060"/><path d="M3.8 5.5 Q5 2.5 8 3.5 Q9.5 4 9.5 5.5 Z" fill="#e04860"/><rect x="9.5" y="1" width="5" height="5.5" fill="#fff" stroke="#111" stroke-width="1.2"/><path d="M10.5 5 L13.5 2" stroke="#e03050" stroke-width="1.4"/></svg>
<svg class="r" style="left:738px;top:92px" width="28" height="24" viewBox="0 0 28 24"><path d="M14 11 L20 5 L23 7.5 L17 13 Z" fill="#c8c8c8" stroke="#222" stroke-width="0.9" stroke-dasharray="1 1"/><path d="M8 14.5 H19 Q21 14.5 21 16 Q21 17.5 19 17.5 H8 Q6.5 17.5 6.5 16 Q6.5 14.5 8 14.5 Z" fill="#444" stroke="#000" stroke-width="1.2"/><path d="M6.5 7 L9.5 5 L20.5 15 L17.5 17.5 Z" fill="#22d0ff" stroke="#0a1848" stroke-width="0.9"/><path d="M7.5 7.3 L9 6.3 L19 15.6 L17.6 16.6 Z" fill="#2a70d0"/><ellipse cx="19" cy="17.3" rx="3" ry="1.6" fill="#20b8f8" stroke="#0a1030" stroke-width="1"/></svg>
<svg class="r" style="left:218px;top:676px" width="24" height="20" viewBox="0 0 24 20"><circle cx="6.5" cy="6" r="5" fill="#2a2a2a"/><circle cx="7.5" cy="7" r="3.8" fill="#c87830"/><path d="M0.5 19 Q1 12 7 12 Q12 12 12.5 19 Z" fill="#4060f0"/><circle cx="16.5" cy="5.5" r="4.3" fill="#f6a858"/><path d="M12.5 3.5 Q16.5 -0.5 20.5 3.5" stroke="#f0d080" stroke-width="1.5" fill="none"/><path d="M10.5 18.5 Q11 11 16.5 11 Q22 11 22.5 18.5 Z" fill="#40b840"/><rect x="15" y="12" width="3" height="5" fill="#e8f8e8"/></svg>
<svg class="r" style="left:219px;top:709px" width="22" height="21" viewBox="0 0 22 21"><rect x="1" y="1" width="19" height="19" rx="2" fill="#fff" stroke="#1a80e0" stroke-width="1.6"/><rect x="1" y="1" width="19" height="3" fill="#1a80e0"/><rect x="5" y="4.5" width="11" height="1" fill="#444"/><rect x="3.5" y="7" width="14" height="10" fill="#f4f4f4" stroke="#555" stroke-width="1"/><rect x="4" y="8.5" width="13" height="0.7" fill="#999"/><rect x="4" y="10.3" width="13" height="0.7" fill="#999"/><rect x="4" y="12.1" width="13" height="0.7" fill="#999"/><rect x="4" y="13.9" width="13" height="0.7" fill="#999"/><rect x="4" y="15.7" width="13" height="0.7" fill="#999"/><rect x="7" y="7" width="0.8" height="10" fill="#d8a070"/><rect x="13" y="7" width="0.8" height="10" fill="#d8a070"/></svg>
<svg class="r" style="left:218px;top:739px" width="24" height="25" viewBox="0 0 24 25"><path d="M2 12 L14 20 L22 12 L22 8 L14 16 L2 8 Z" fill="#d88a3a" stroke="#6a4020" stroke-width="0.8"/><path d="M2 8 L10 2 L22 8 L14 16 Z" fill="#f0f0f0" stroke="#888" stroke-width="0.6"/><rect x="5" y="5" width="4" height="1.5" fill="#40b040" transform="rotate(-35 7 6)"/><rect x="8" y="3" width="4" height="1.5" fill="#a040c0" transform="rotate(-35 10 4)"/><rect x="10" y="2" width="5" height="1.5" fill="#3050e0" transform="rotate(-35 12 3)"/><rect x="12" y="1" width="5" height="1.5" fill="#e0c040" transform="rotate(-35 14 2)"/><path d="M2 12 L14 20 L14 24 L2 16 Z" fill="#c07a30"/></svg>
<svg class="r" style="left:218px;top:772px" width="25" height="21" viewBox="0 0 25 21"><path d="M4 4 L11 1 L22 4" fill="none" stroke="#8a8a8a" stroke-width="1.2"/><rect x="1" y="5" width="22" height="11" fill="#f4f4ec" stroke="#7a7a7a" stroke-width="1.3"/><circle cx="6" cy="10.5" r="2.5" fill="#fff" stroke="#888"/><circle cx="17" cy="10.5" r="2.5" fill="#fff" stroke="#7a7"/><circle cx="17" cy="10.5" r="1" fill="#2a2"/><rect x="10" y="8" width="3" height="5" fill="#999"/><path d="M15 17 L19 19" stroke="#555" stroke-width="1.5"/></svg>
<svg class="r" style="left:219px;top:807px" width="21" height="18" viewBox="0 0 21 18"><ellipse cx="10" cy="9" rx="9.5" ry="8" fill="#3a8ee8" stroke="#707080" stroke-width="0.8"/><path d="M0.8 8 Q1 1 10 1 Q19 1 19.2 8 Z" fill="#f8d878"/><path d="M13 1.5 Q19 3 19.2 9 L12 7 Z" fill="#e05878"/><path d="M2 11 Q10 14 18 10" stroke="#a8e0ff" stroke-width="1.5" fill="none"/></svg>
<svg class="r" style="left:224px;top:836px" width="12" height="25" viewBox="0 0 12 25"><path d="M6 0.5 L2 8 L1 13 L11 13 L10 8 Z" fill="#40b040" stroke="#202020" stroke-width="0.8"/><path d="M2 14 L10 14 L9 20 L6 23 L3 20 Z" fill="#f0a040"/></svg>
<svg class="r" style="left:218px;top:868px" width="25" height="26" viewBox="0 0 25 26"><path d="M1 13 L12 2 L24 13 L12 24 Z" fill="#f4f4f4" stroke="#606060" stroke-width="1.2"/><path d="M2 4 L12 12" stroke="#8a5a20" stroke-width="3.2"/><path d="M3 3 L13 11" stroke="#d09850" stroke-width="1.2"/><path d="M3 12 L10 12 L12 15 L5 15 Z" fill="#a87838"/><circle cx="2.5" cy="3.5" r="1.3" fill="#e04040"/></svg>
<svg class="r" style="left:218px;top:902px" width="25" height="24" viewBox="0 0 25 24"><path d="M2 3 L14 1 L15 15 L3 17 Z" fill="#38c0f8" stroke="#3060c0" stroke-width="0.8"/><rect x="15" y="3" width="8" height="15" fill="#dfe8f8" stroke="#3050b0" stroke-width="0.8"/><rect x="18" y="6" width="3" height="6" fill="#6a88d8"/><ellipse cx="7" cy="20" rx="6" ry="3" fill="#f0f0f0" stroke="#4070d0" stroke-width="0.8"/></svg>
</body></html>
